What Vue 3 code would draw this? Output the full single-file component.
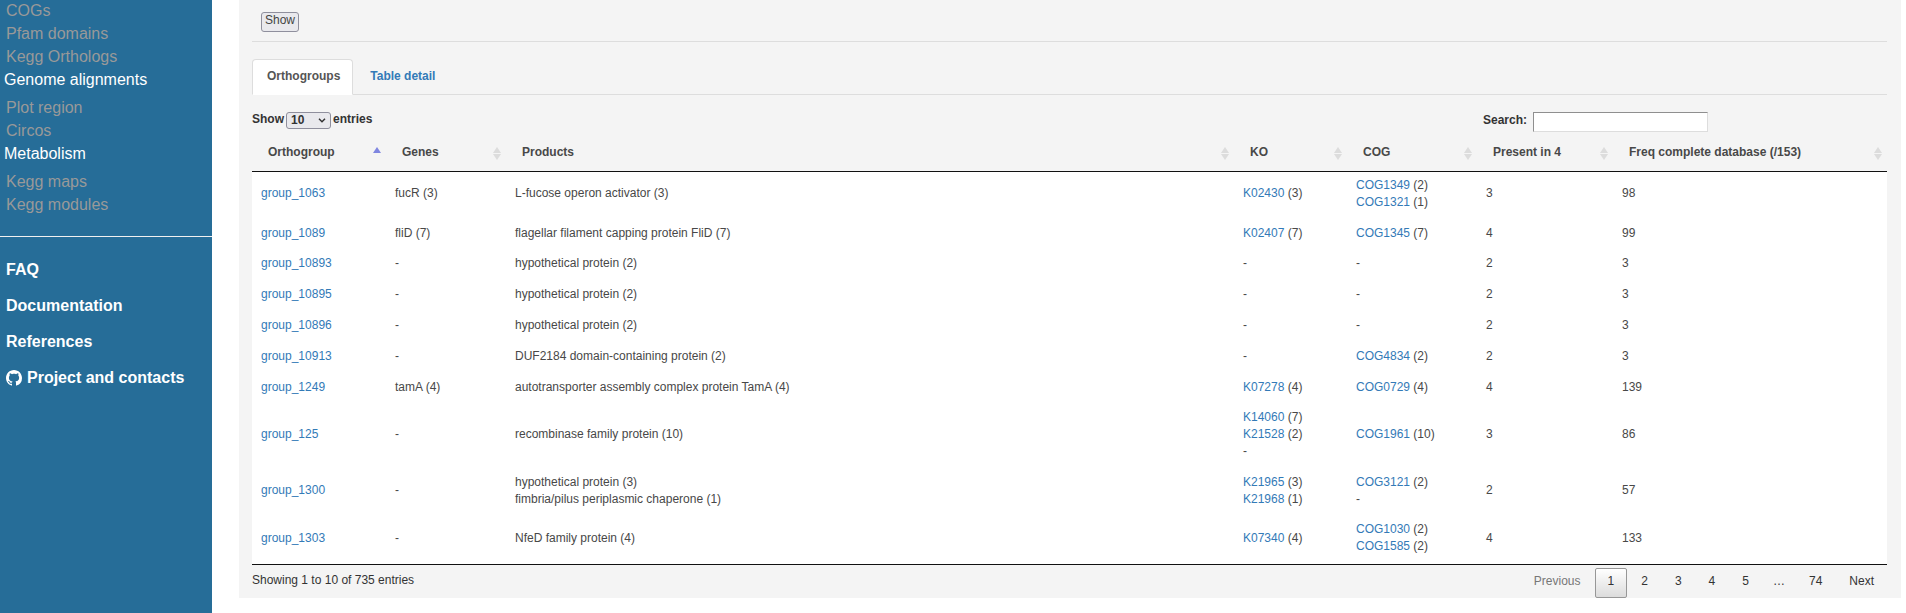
<script setup>
import { ref } from 'vue'

const groups = [
  { items: ['COGs', 'Pfam domains', 'Kegg Orthologs'] },
  { title: 'Genome alignments', items: ['Plot region', 'Circos'] },
  { title: 'Metabolism', items: ['Kegg maps', 'Kegg modules'] },
]

const columns = [
  { label: 'Orthogroup', cls: 'c-group', sorted: true },
  { label: 'Genes', cls: 'c-genes' },
  { label: 'Products', cls: 'c-products' },
  { label: 'KO', cls: 'c-ko' },
  { label: 'COG', cls: 'c-cog' },
  { label: 'Present in 4', cls: 'c-present' },
  { label: 'Freq complete database (/153)', cls: 'c-freq' },
]

const rows = [
  { id: 'group_1063', gene: 'fucR (3)', products: ['L-fucose operon activator (3)'], ko: [['K02430', 3]], cog: [['COG1349', 2], ['COG1321', 1]], present: 3, freq: 98 },
  { id: 'group_1089', gene: 'fliD (7)', products: ['flagellar filament capping protein FliD (7)'], ko: [['K02407', 7]], cog: [['COG1345', 7]], present: 4, freq: 99 },
  { id: 'group_10893', gene: '-', products: ['hypothetical protein (2)'], ko: [[]], cog: [[]], present: 2, freq: 3 },
  { id: 'group_10895', gene: '-', products: ['hypothetical protein (2)'], ko: [[]], cog: [[]], present: 2, freq: 3 },
  { id: 'group_10896', gene: '-', products: ['hypothetical protein (2)'], ko: [[]], cog: [[]], present: 2, freq: 3 },
  { id: 'group_10913', gene: '-', products: ['DUF2184 domain-containing protein (2)'], ko: [[]], cog: [['COG4834', 2]], present: 2, freq: 3 },
  { id: 'group_1249', gene: 'tamA (4)', products: ['autotransporter assembly complex protein TamA (4)'], ko: [['K07278', 4]], cog: [['COG0729', 4]], present: 4, freq: 139 },
  { id: 'group_125', gene: '-', products: ['recombinase family protein (10)'], ko: [['K14060', 7], ['K21528', 2], []], cog: [['COG1961', 10]], present: 3, freq: 86 },
  { id: 'group_1300', gene: '-', products: ['hypothetical protein (3)', 'fimbria/pilus periplasmic chaperone (1)'], ko: [['K21965', 3], ['K21968', 1]], cog: [['COG3121', 2], []], present: 2, freq: 57 },
  { id: 'group_1303', gene: '-', products: ['NfeD family protein (4)'], ko: [['K07340', 4]], cog: [['COG1030', 2], ['COG1585', 2]], present: 4, freq: 133 },
]

const pageLength = ref('10')
const search = ref('')
</script>

<template>
  <div class="page">
    <nav class="sidebar">
      <template v-for="(g, i) in groups" :key="i">
        <div v-if="g.title" class="side-title">{{ g.title }}</div>
        <ul class="side-list">
          <li v-for="item in g.items" :key="item"><a href="#">{{ item }}</a></li>
        </ul>
      </template>
      <hr class="side-rule" />
      <ul class="side-main">
        <li><a href="#">FAQ</a></li>
        <li><a href="#">Documentation</a></li>
        <li><a href="#">References</a></li>
        <li>
          <a href="#" class="with-icon">
            <svg width="16" height="16" viewBox="0 0 16 16" fill="currentColor" aria-hidden="true">
              <path d="M8 0C3.58 0 0 3.58 0 8c0 3.54 2.29 6.53 5.47 7.59.4.07.55-.17.55-.38 0-.19-.01-.82-.01-1.49-2.01.37-2.53-.49-2.69-.94-.09-.23-.48-.94-.82-1.13-.28-.15-.68-.52-.01-.53.63-.01 1.08.58 1.23.82.72 1.21 1.87.87 2.33.66.07-.52.28-.87.51-1.07-1.78-.2-3.64-.89-3.64-3.95 0-.87.31-1.59.82-2.15-.08-.2-.36-1.02.08-2.12 0 0 .67-.21 2.2.82.64-.18 1.32-.27 2-.27s1.36.09 2 .27c1.53-1.04 2.2-.82 2.2-.82.44 1.1.16 1.92.08 2.12.51.56.82 1.27.82 2.15 0 3.07-1.87 3.75-3.65 3.95.29.25.54.73.54 1.48 0 1.07-.01 1.93-.01 2.2 0 .21.15.46.55.38A8.01 8.01 0 0 0 16 8c0-4.42-3.58-8-8-8z" />
            </svg>
            Project and contacts
          </a>
        </li>
      </ul>
    </nav>

    <main class="panel">
      <div class="submit-row"><button type="button" class="show-btn">Show</button></div>

      <div class="tabs" role="tablist">
        <a href="#" role="tab" class="tab active" aria-selected="true">Orthogroups</a>
        <a href="#" role="tab" class="tab">Table detail</a>
      </div>

      <div class="controls">
        <label class="length">
          Show
          <span class="select-wrap">
            <select v-model="pageLength">
              <option>10</option>
              <option>25</option>
              <option>50</option>
              <option>100</option>
            </select>
            <svg class="chevron" width="8" height="5" viewBox="0 0 8 5" fill="none" stroke="#333" stroke-width="1.4" aria-hidden="true"><path d="M1 .7 4 3.8 7 .7" /></svg>
          </span>
          entries
        </label>
        <label class="filter">Search: <input v-model="search" type="text" /></label>
      </div>

      <table>
        <thead>
          <tr>
            <th v-for="c in columns" :key="c.label" :class="c.cls" scope="col">
              <div class="head">
                <span>{{ c.label }}</span>
                <svg v-if="c.sorted" width="8" height="14" viewBox="0 0 8 14" aria-hidden="true"><path d="M4 0 8 6H0z" fill="#7f86e0" /></svg>
                <svg v-else width="8" height="14" viewBox="0 0 8 14" fill="#dcdcdc" aria-hidden="true"><path d="M4 0 8 6H0zM0 7h8L4 13z" /></svg>
              </div>
            </th>
          </tr>
        </thead>
        <tbody>
          <tr v-for="r in rows" :key="r.id">
            <td><a href="#">{{ r.id }}</a></td>
            <td>{{ r.gene }}</td>
            <td><div v-for="p in r.products" :key="p">{{ p }}</div></td>
            <td>
              <div v-for="(k, i) in r.ko" :key="i">
                <template v-if="k.length"><a href="#">{{ k[0] }}</a> ({{ k[1] }})</template><template v-else>-</template>
              </div>
            </td>
            <td>
              <div v-for="(k, i) in r.cog" :key="i">
                <template v-if="k.length"><a href="#">{{ k[0] }}</a> ({{ k[1] }})</template><template v-else>-</template>
              </div>
            </td>
            <td>{{ r.present }}</td>
            <td>{{ r.freq }}</td>
          </tr>
        </tbody>
      </table>

      <div class="footer">
        <div class="info">Showing 1 to 10 of 735 entries</div>
        <div class="pages">
          <button type="button" disabled>Previous</button>
          <button type="button" class="current">1</button>
          <button v-for="n in 4" :key="n" type="button">{{ n + 1 }}</button>
          <span class="ellipsis">…</span>
          <button type="button">74</button>
          <button type="button">Next</button>
        </div>
      </div>
    </main>
  </div>
</template>

<style>
body {
  background: #fff;
}
</style>

<style scoped>
.page {
  display: flex;
  min-height: 100vh;
  font: 12px/1.4 "Liberation Sans", Arial, sans-serif;
  color: #484848;
}
.page * {
  box-sizing: border-box;
}
a {
  color: #337ab7;
  text-decoration: none;
}
ul {
  list-style: none;
  margin: 0;
  padding: 0;
}
.sidebar {
  flex: 0 0 212px;
  background: #266d98;
  font-size: 16px;
  line-height: 23px;
}
.side-title {
  padding-left: 4px;
  color: #fff;
}
.side-list {
  padding: 0 0 0 6px;
}
.side-list:first-child {
  margin-top: -1px;
}
.side-title + .side-list {
  padding-top: 5px;
}
.side-list a {
  color: #999;
}
.side-rule {
  margin: 20px 0 15px;
  border: 0;
  border-top: 1px solid #f0f0f0;
}
.side-main a {
  display: block;
  padding: 6px;
  line-height: 24px;
  font-weight: bold;
  color: #fff;
}
.side-main .with-icon {
  display: flex;
  align-items: center;
  gap: 5px;
}
.panel {
  flex: 1;
  min-width: 0;
  align-self: flex-start;
  margin: 0 5px 0 27px;
  padding: 0 14px 0 13px;
  background: #f4f4f4;
}
.submit-row {
  padding: 12px 9px 9px;
  border-bottom: 1px solid #ddd;
  display: flex;
}
.show-btn {
  height: 20px;
  padding: 0 3px 4px;
  border: 1px solid #8f8f9d;
  border-radius: 3px;
  background: #e9e9ed;
  font: inherit;
  line-height: 14px;
  color: #444;
}
.tabs {
  display: flex;
  gap: 2px;
  margin-top: 17px;
  border-bottom: 1px solid #ddd;
}
.tab {
  margin-bottom: -1px;
  padding: 7px 12px 9px 14px;
  border: 1px solid transparent;
  border-radius: 4px 4px 0 0;
  line-height: 18px;
  font-weight: bold;
}
.tab.active {
  color: #555;
  background: #fff;
  border-color: #ddd #ddd #fff;
}
.controls {
  display: flex;
  justify-content: space-between;
  align-items: flex-start;
  padding-top: 17px;
  font-weight: bold;
  color: #333;
}
.length {
  display: flex;
  gap: 2px;
  line-height: 15px;
}
.select-wrap {
  display: grid;
  align-items: center;
}
.select-wrap > * {
  grid-area: 1 / 1;
}
select {
  appearance: none;
  width: 45px;
  height: 17px;
  padding: 0 4px 2px;
  border: 1px solid #8f8f9d;
  border-radius: 3px;
  background: #e9e9ed;
  font: inherit;
  color: #333;
}
.chevron {
  justify-self: end;
  margin-right: 5px;
  pointer-events: none;
}
.filter {
  display: flex;
  gap: 6px;
  margin-right: 179px;
  line-height: 16px;
}
.filter input {
  width: 175px;
  height: 20px;
  padding: 1px 2px;
  border: 1px solid;
  border-color: #8f8f8f #ddd #ddd #8f8f8f;
  background: #fff;
  font: inherit;
}
table {
  width: 100%;
  table-layout: fixed;
  border-collapse: separate;
  border-spacing: 0;
  border-bottom: 1px solid #111;
}
.c-group { width: 134px; }
.c-genes { width: 120px; }
.c-ko { width: 113px; }
.c-cog { width: 130px; }
.c-present { width: 136px; }
.c-freq { width: 274px; }
th {
  padding: 11px 5px 10px 16px;
  border-bottom: 1px solid #111;
  text-align: left;
}
.head {
  display: flex;
  justify-content: space-between;
  align-items: flex-end;
  line-height: 18px;
}
td {
  padding: 5px 9px 9px;
  background: #fff;
  vertical-align: middle;
}
.footer {
  display: flex;
  justify-content: space-between;
  align-items: flex-start;
  padding-top: 3px;
  color: #333;
}
.info {
  padding-top: 4px;
}
.pages {
  display: flex;
  gap: 1px;
}
.pages button,
.ellipsis {
  height: 30px;
  padding: 0 12px 4px;
  border: 1px solid transparent;
  border-radius: 2px;
  background: transparent;
  font: inherit;
  line-height: 24px;
  color: #333;
}
.pages .ellipsis {
  padding: 0 10px 4px;
  border-width: 1px 0;
}
.pages button:disabled {
  color: #777;
}
.pages .current {
  border-color: #979797;
  background: linear-gradient(#fff, #dcdcdc);
}
</style>
